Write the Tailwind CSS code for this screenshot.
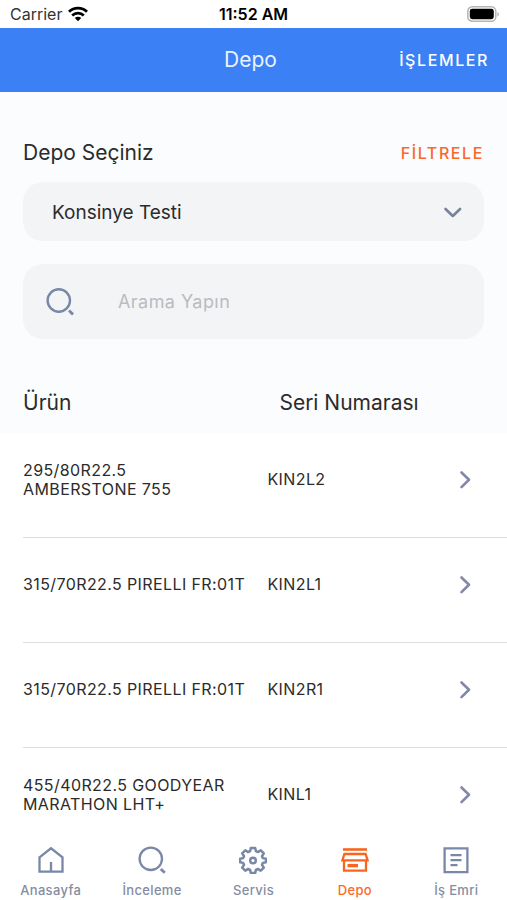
<!DOCTYPE html>
<html lang="tr">
<head>
<meta charset="utf-8">
<meta name="viewport" content="width=device-width, initial-scale=1">
<title>Depo</title>
<script src="https://cdn.jsdelivr.net/npm/@tailwindcss/browser@4"></script>
</head>
<body class="flex h-screen flex-col overflow-hidden bg-white font-[Inter,sans-serif] text-[#2b2b2b]">
  <div class="grid h-7 shrink-0 grid-cols-3 items-center px-2 text-black">
    <div class="flex items-center gap-1.5 pl-0.5 text-base text-[#333]">
      <span>Carrier</span>
      <svg class="h-4 w-5" viewBox="0 0 20 16" fill="none" stroke="#000" stroke-width="2.8" aria-hidden="true">
        <path d="M1 5.8a13 13 0 0 1 18 0"/>
        <path d="M4.2 9.4a8.4 8.4 0 0 1 11.6 0"/>
        <path d="M10 15.2 6.8 12a4.6 4.6 0 0 1 6.4 0Z" fill="#000" stroke="none"/>
      </svg>
    </div>
    <div class="text-center text-base font-semibold">11:52 AM</div>
    <svg class="h-4 w-8 justify-self-end" viewBox="0 0 32 16" aria-hidden="true">
      <rect x="0.8" y="0.8" width="28" height="14.4" rx="4.5" fill="#fff" stroke="#b5b5b5" stroke-width="1.5"/>
      <rect x="2.8" y="2.8" width="24" height="10.4" rx="2.4" fill="#000"/>
      <path d="M30.4 6v4.4c2-.8 2-3.6 0-4.4Z" fill="#b5b5b5"/>
    </svg>
  </div>

  <header class="grid h-16 shrink-0 grid-cols-3 items-center bg-[#3b80f5] pr-[18px] pl-3 text-white">
    <h1 class="col-start-2 text-center text-[21px] text-[#eaf2ff]">Depo</h1>
    <button type="button" class="justify-self-end text-base font-medium tracking-widest">İŞLEMLER</button>
  </header>

  <main class="min-h-0 flex-1 overflow-hidden">
    <section class="bg-[#fbfcfe] px-[23px] pt-[45px]">
      <div class="flex h-8 items-center justify-between">
        <label for="depot" class="text-[21px]">Depo Seçiniz</label>
        <button type="button" class="text-base font-medium tracking-widest text-[#f9682a]">FİLTRELE</button>
      </div>
      <div class="relative mt-[13px]">
        <select id="depot" class="block h-[59px] w-full appearance-none rounded-[20px] bg-[#f2f4f6] px-[29px] pt-1 text-[19px] outline-none">
          <option>Konsinye Testi</option>
        </select>
        <svg class="pointer-events-none absolute top-1/2 right-5 size-6 -translate-y-1/2" viewBox="0 0 24 24" fill="none" stroke="#78829a" stroke-width="2.6" stroke-linecap="round" stroke-linejoin="round" aria-hidden="true"><path d="m5.500 9 7.300 7 7.300-7"/></svg>
      </div>
      <div class="mt-[23px] flex h-[75px] items-center rounded-[20px] bg-[#f2f4f6] px-[23px]">
        <label for="search" aria-label="Arama" class="shrink-0">
          <svg class="size-7" viewBox="0 0 28 28" fill="none" stroke="#7888a6" stroke-width="2.4" aria-hidden="true"><circle cx="12.8" cy="12.5" r="11.2"/><path d="m23 22.500 4 4" stroke-width="2.8"/></svg>
        </label>
        <input id="search" type="text" placeholder="Arama Yapın" class="ml-11 min-w-0 flex-1 bg-transparent text-lg tracking-wide outline-none placeholder:text-[#b9bcc1]">
      </div>
    </section>

    <table class="w-full table-fixed border-collapse text-left">
      <thead class="bg-[#fbfcfe]">
        <tr class="h-[94px]">
          <th scope="col" class="w-[49%] pt-[34px] pl-[23px] text-[21px] font-normal">Ürün</th>
          <th scope="col" class="pt-[34px] pl-[31px] text-[21px] font-normal whitespace-nowrap">Seri Numarası</th>
          <td class="w-[72px]"></td>
        </tr>
      </thead>
      <tbody class="text-base leading-[19px] tracking-wide [&_td]:relative [&_td]:pb-3 [&_td]:after:absolute [&_td]:after:right-0 [&_td]:after:bottom-0 [&_td]:after:h-px [&_td]:after:bg-[#dcdde0]">
        <tr class="h-[105px]">
          <td class="pl-[23px] after:left-[23px]">295/80R22.5<br>AMBERSTONE 755</td>
          <td class="pl-[19px] after:left-0">KIN2L2</td>
          <td class="after:left-0"><button type="button" aria-label="KIN2L2 detayı" class="block p-4.5"><svg class="size-6" viewBox="0 0 24 24" fill="none" stroke="#8388a6" stroke-width="2.6" stroke-linecap="round" stroke-linejoin="round" aria-hidden="true"><path d="m8.500 4.500 7.500 7.300-7.500 7.300"/></svg></button></td>
        </tr>
        <tr class="h-[105px]">
          <td class="pl-[23px] after:left-[23px]">315/70R22.5 PIRELLI FR:01T</td>
          <td class="pl-[19px] after:left-0">KIN2L1</td>
          <td class="after:left-0"><button type="button" aria-label="KIN2L1 detayı" class="block p-4.5"><svg class="size-6" viewBox="0 0 24 24" fill="none" stroke="#8388a6" stroke-width="2.6" stroke-linecap="round" stroke-linejoin="round" aria-hidden="true"><path d="m8.500 4.500 7.500 7.300-7.500 7.300"/></svg></button></td>
        </tr>
        <tr class="h-[105px]">
          <td class="pl-[23px] after:left-[23px]">315/70R22.5 PIRELLI FR:01T</td>
          <td class="pl-[19px] after:left-0">KIN2R1</td>
          <td class="after:left-0"><button type="button" aria-label="KIN2R1 detayı" class="block p-4.5"><svg class="size-6" viewBox="0 0 24 24" fill="none" stroke="#8388a6" stroke-width="2.6" stroke-linecap="round" stroke-linejoin="round" aria-hidden="true"><path d="m8.500 4.500 7.500 7.300-7.500 7.300"/></svg></button></td>
        </tr>
        <tr class="h-[105px]">
          <td class="pl-[23px] after:left-[23px]">455/40R22.5 GOODYEAR<br>MARATHON LHT+</td>
          <td class="pl-[19px] after:left-0">KINL1</td>
          <td class="after:left-0"><button type="button" aria-label="KINL1 detayı" class="block p-4.5"><svg class="size-6" viewBox="0 0 24 24" fill="none" stroke="#8388a6" stroke-width="2.6" stroke-linecap="round" stroke-linejoin="round" aria-hidden="true"><path d="m8.500 4.500 7.500 7.300-7.500 7.300"/></svg></button></td>
        </tr>
      </tbody>
    </table>
  </main>

  <nav class="grid h-[60px] shrink-0 grid-cols-5 bg-white pt-1.5 text-[13px] leading-4 font-medium tracking-wide text-[#858da3]">
    <a href="#anasayfa" class="flex flex-col items-center gap-2">
      <svg class="size-7" viewBox="0 0 28 28" fill="none" stroke="#7888a6" stroke-width="2.300" aria-hidden="true"><path d="M2.500 11.300 14 2.300l11.500 9V25.700h-23Z"/><path d="M14 25V16"/></svg>
      <span>Anasayfa</span>
    </a>
    <a href="#inceleme" class="flex flex-col items-center gap-2">
      <svg class="size-7" viewBox="0 0 28 28" fill="none" stroke="#7888a6" stroke-width="2.300" aria-hidden="true"><circle cx="12.800" cy="12.800" r="11.200"/><path d="m22.800 23 4 3.800" stroke-width="2.800"/></svg>
      <span>İnceleme</span>
    </a>
    <a href="#servis" class="flex flex-col items-center gap-2">
      <svg class="size-7" viewBox="0 0 28 28" fill="none" stroke="#7888a6" stroke-width="2.500" stroke-linejoin="round" aria-hidden="true"><path d="M11.800 2h4.400l.7 3.200 2 .9 2.800-1.800 3.100 3.100L23 10.200l.8 1.900 3.200.7v3.400l-3.200.7-.8 1.900 1.800 2.800-3.100 3.100-2.800-1.800-2 .9-.7 3.200h-4.400l-.7-3.200-2-.9-2.800 1.800-3.100-3.100L5 18.800l-.8-1.900-3.200-.7v-3.400l3.200-.7.800-1.900-1.800-2.800 3.100-3.100 2.800 1.800 2-.9Z"/><circle cx="14" cy="14.500" r="2.800"/></svg>
      <span>Servis</span>
    </a>
    <a href="#depo" aria-current="page" class="flex flex-col items-center gap-2 text-[#fa6a2a]">
      <svg class="size-7" viewBox="0 0 28 28" fill="none" stroke="#f9651f" stroke-width="2.300" aria-hidden="true"><path d="M2 3.500h24" stroke-width="2.600"/><path d="M3.400 8h21.200l2 6.400H1.400Z"/><path d="M3 14.400v10.200h22V14.400"/><path d="M6.500 19.600h10.500" stroke-width="3.400"/></svg>
      <span>Depo</span>
    </a>
    <a href="#is-emri" class="flex flex-col items-center gap-2">
      <svg class="size-7" viewBox="0 0 28 28" fill="none" stroke="#7888a6" stroke-width="2.300" aria-hidden="true"><path d="M2.600 2.300h22.800v23.800H2.600Z"/><path d="M8.500 9.200h11M8.500 14.200h11M8.500 19.200h7"/></svg>
      <span>İş Emri</span>
    </a>
  </nav>
</body>
</html>
